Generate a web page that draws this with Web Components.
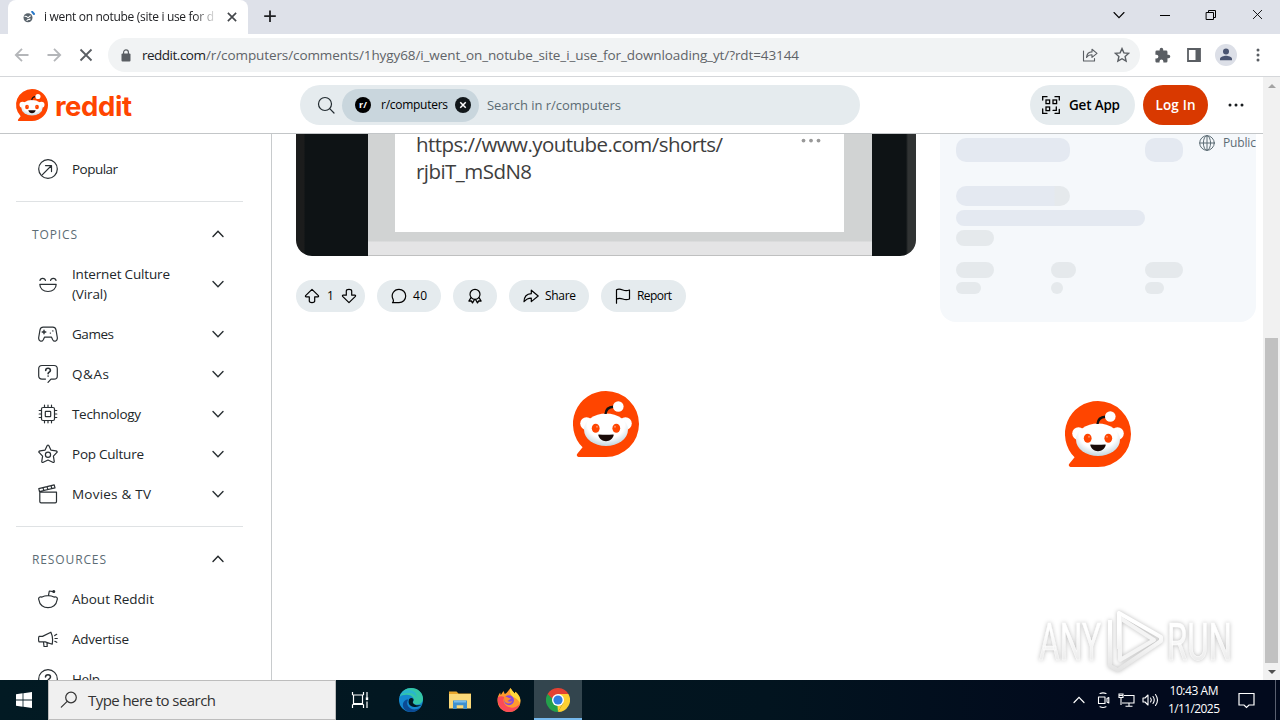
<!DOCTYPE html>
<html lang="en">
<head>
<meta charset="utf-8">
<title>reddit</title>
<style>
html,body{margin:0;width:1280px;height:720px;overflow:hidden;background:#fff}
body{font:14px/20px "Open Sans","Noto Sans",sans-serif;color:#181c1f}
</style>
</head>
<body>
<desktop-screen></desktop-screen>
<script>
const def=(name,html,setup)=>customElements.define(name,class extends HTMLElement{
  connectedCallback(){
    if(this.shadowRoot)return;
    const root=this.attachShadow({mode:'open'});
    const t=document.createElement('template');
    t.innerHTML=typeof html==='function'?html(this):html;
    root.appendChild(t.content.cloneNode(true));
    if(setup)setup(this,root);
  }
});

/* A single line of text, tracked so that it fills the width in its w attribute. */
def('fit-text',e=>`<style>:host{display:inline-block;white-space:pre;flex:none;width:${e.getAttribute('w')}px}</style><span><slot></slot></span>`,(e,root)=>{
  const s=root.querySelector('span'),n=e.textContent.length;
  const nat=s.getBoundingClientRect().width;
  if(n>1)s.style.letterSpacing=((+e.getAttribute('w')-nat)/(n-1))+'px';
});

const svg=(vb,body,extra='')=>`<svg viewBox="${vb}" fill="none" stroke="currentColor" stroke-linecap="round" stroke-linejoin="round" stroke-width="1.2" ${extra}>${body}</svg>`;
const ICONS={
  back:svg('0 0 16 16','<path d="M14.5 8H2M8 1.8 1.8 8 8 14.2" stroke-width="1.8" stroke-linecap="butt" stroke-linejoin="miter"/>'),
  fwd:svg('0 0 16 16','<path d="M1.5 8H14M8 1.8 14.2 8 8 14.2" stroke-width="1.8" stroke-linecap="butt" stroke-linejoin="miter"/>'),
  x:svg('0 0 16 16','<path d="M2.5 2.5l11 11M13.5 2.5l-11 11" stroke-width="var(--sw,1.8)" stroke-linecap="butt"/>'),
  plus:svg('0 0 16 16','<path d="M8 2.500v11.500M2.200 8.200h11.600" stroke-width="1.800" stroke-linecap="butt"/>'),
  lock:svg('0 0 10 13','<rect x=".5" y="4.6" width="9" height="8" rx="1" fill="currentColor" stroke="none"/><path d="M2.6 5V3.3a2.4 2.4 0 0 1 4.8 0V5"/>'),
  min:svg('0 0 12 12','<path d="M1 6.5h10" stroke-width="1" stroke-linecap="butt"/>'),
  restore:svg('0 0 12 12','<path d="M1.5 3.5h7v7h-7zM3.5 3.5v-2h7v7h-2" stroke-width="1" stroke-linejoin="miter"/>'),
  down:svg('0 0 12 12','<path d="M1 3.5 6 8.7l5-5.2" stroke-width="var(--sw,1.5)" stroke-linejoin="miter"/>'),
  up:svg('0 0 12 12','<path d="M1 8.5 6 3.3l5 5.2" stroke-width="var(--sw,1.5)" stroke-linejoin="miter"/>'),
  shareout:svg('0 0 16 16','<path d="M1.5 4v10h11v-2.5M4.5 10.5c.4-4 2.4-5.500 5.500-5.600V2.300L15 6.400l-5 4V7.800c-2.500 0-4 .6-5.500 2.700z" stroke-width="1.1"/>'),
  star:svg('0 0 16 16','<path d="M8 1.600 9.900 5.900l4.700.5-3.500 3.100 1 4.600L8 11.700l-4.100 2.400 1-4.600L1.400 6.400l4.700-.5z" stroke-width="1.4" stroke-linejoin="miter"/>'),
  puzzle:svg('0 0 24 24','<path fill="currentColor" stroke="none" d="M20.500 11H19V7a2 2 0 0 0-2-2h-4V3.500a2.500 2.500 0 0 0-5 0V5H4a2 2 0 0 0-2 2v3.800h1.500a2.700 2.700 0 0 1 0 5.400H2V20c0 1.100.9 2 2 2h3.800v-1.500a2.700 2.700 0 0 1 5.400 0V22H17a2 2 0 0 0 2-2v-4h1.500a2.500 2.500 0 0 0 0-5z"/>'),
  panel:svg('0 0 14 14','<path d="M1 1h12v12H1z" stroke-width="1.800" stroke-linejoin="miter"/><path d="M8.500 1H13v12H8.500z" fill="currentColor" stroke="none"/>'),
  user:svg('0 0 22 22','<circle cx="11" cy="11" r="11" fill="#dcdfe7" stroke="none"/><g fill="#4a5470" stroke="none"><circle cx="11" cy="7.600" r="3"/><path d="M5 16.300v-1.500c0-2 4-3 6-3s6 1 6 3v1.500z"/></g>'),
  vdots:svg('0 0 4 14','<g fill="currentColor" stroke="none"><circle cx="2" cy="2" r="1.500"/><circle cx="2" cy="7" r="1.500"/><circle cx="2" cy="12" r="1.500"/></g>'),
  hdots:svg('0 0 16 4','<g fill="currentColor" stroke="none"><circle cx="2" cy="2" r="1.500"/><circle cx="8" cy="2" r="1.500"/><circle cx="14" cy="2" r="1.500"/></g>'),
  search:svg('0 0 18 18','<circle cx="8" cy="8" r="6.500"/><path d="M12.700 12.700 17 17"/>'),
  winsearch:svg('0 0 18 18','<circle cx="11" cy="6.500" r="5.300"/><path d="M7.200 10.300 1.300 16.200"/>'),
  qr:svg('0 0 20 20','<g stroke-width="1.300" stroke-linejoin="miter"><path d="M1.700 5V1.700H6M14 1.700h4.300V5M1.700 14v4.300H6M18.300 14.500v3.800H14"/><rect x="5" y="5" width="3.600" height="3.600"/><rect x="12" y="5" width="3.600" height="3.600"/><rect x="5" y="12" width="3.600" height="3.600"/><path d="M12 15.300h3.300V12"/></g>'),
  popular:svg('0 0 20 20','<circle cx="10" cy="10" r="9.300"/><path d="m4.200 15.800 8.800-8.800M7.500 6.600h6v6"/>'),
  smile:svg('0 0 20 20','<path d="M1.800 10.300h16.400c0 4.500-3.600 7.200-8.200 7.200s-8.200-2.700-8.200-7.200zM2 6.500c.4-2.900 5-2.900 5.400 0M12.600 6.500c.4-2.900 5-2.900 5.400 0"/>'),
  games:svg('0 0 20 20','<path d="M5.200 3.200h9.600c1.700 0 2.800 1 3.200 2.700l1.300 7.600c.5 3.600-3 5-4.600 2.200l-1.300-2.600H6.600l-1.300 2.600C3.700 18.500.200 17.100.700 13.500L2 5.900c.4-1.700 1.500-2.700 3.200-2.700z"/><path d="M6 6.200v3.600M4.200 8h3.600M12.300 9.100h.1M14.800 6.900h.1" stroke-width="1.400"/>'),
  qa:svg('0 0 20 20','<path d="M4 1.500h12c2 0 3.300 1.300 3.300 3.200v7.200c0 2-1.300 3.200-3.300 3.200h-3l-3 3.200M7.500 15.100H4c-2 0-3.300-1.200-3.300-3.200V4.700C.7 2.800 2 1.500 4 1.500"/><path d="M7.700 6.500c0-3 4.700-2.900 4.700-.1 0 1.800-2.300 1.800-2.300 3.400M10.100 12v.1" stroke-width="1.600"/>'),
  chip:svg('0 0 20 20','<rect x="3.500" y="3.500" width="13" height="13" rx="1.500"/><rect x="7.300" y="7.300" width="5.400" height="5.400" rx=".6"/><path d="M6.500 1.200v2M10 1.200v2M13.500 1.200v2M6.500 16.800v2M10 16.800v2M13.500 16.800v2M1.200 6.500h2M1.200 10h2M1.200 13.500h2M16.800 6.500h2M16.800 10h2M16.800 13.500h2" stroke-width="1.200"/>'),
  popstar:svg('0 0 20 20','<path d="M10 1c.4 0 .6.300.8.600l2.100 4.500 5 .7c1.200.2 1.600 1.100.8 1.900l-3.300 3.500.8 4.900c.2 1.100-.5 1.700-1.500 1.200L10 16l-4.700 2.300c-1 .5-1.700-.1-1.500-1.200l.8-4.900L1.300 8.700c-.8-.8-.4-1.700.8-1.900l5-.7 2.100-4.500c.2-.3.400-.6.800-.6z"/><circle cx="10" cy="10.700" r="2.600"/>'),
  movie:svg('0 0 20 20','<path d="M1.800 8.200h16.700v9.300c0 .8-.5 1.300-1.300 1.300H3.100c-.8 0-1.300-.5-1.300-1.300zM1.500 7.500.8 4.700 16.200.9l.8 2.900zM5 3.800l.8 2.600M9 2.700l.8 2.700M13 1.700l.8 2.800"/>'),
  about:svg('0 0 20 20','<path d="M10 6.600c2.500 0 4.600.6 6 1.500 2-.9 4.200.5 3 3.100-.5 4.600-4.500 7.500-9 7.500s-8.500-2.900-9-7.500c-1.200-2.600 1-4 3-3.100 1.400-.9 3.500-1.500 6-1.500zM10.500 6.400 11.300 2l4 .6"/><circle cx="15.800" cy="2.500" r=".9" fill="currentColor"/>'),
  ad:svg('0 0 20 20','<path d="M1 7.400h3.500L12.900 3.200c1.500 3 2 8 1.300 12l-7-2.300H1c-.6-1.800-.6-3.700 0-5.500zM5.500 13l.5 4.500h3.200l-.2-3.800M16.700 6.600l2-1.300M17 9.500h2.300M16.800 12.300l2 1"/>'),
  help:svg('0 0 20 20','<circle cx="10" cy="10" r="9.300"/><path d="M7.500 8c0-3 5-3 5 0 0 1.800-2.500 1.800-2.500 3.500M10 14v.1" stroke-width="1.500"/>'),
  upvote:svg('0 0 16 16','<path d="M8 1.300 1.600 7.700c-.4.500-.1 1.100.5 1.100h3.200v4.300c0 2 5.400 2 5.400 0V8.800h3.200c.6 0 .9-.6.5-1.100z"/>'),
  downvote:svg('0 0 16 16','<path d="M8 14.700 1.600 8.300c-.4-.5-.1-1.100.5-1.100h3.200V2.900c0-2 5.400-2 5.400 0v4.300h3.200c.6 0 .9.600.5 1.100z"/>'),
  comment:svg('0 0 16 16','<path d="M1.500 14.700c1-1 1.200-2 .6-3.300C-.5 6.500 3 1.300 8 1.300c3.800 0 6.700 3 6.700 6.700S11.800 14.700 8 14.700z"/>'),
  award:svg('0 0 16 16','<circle cx="8" cy="6.300" r="5"/><path d="M4 9.700 1.900 13l2.400-.1 1.200 2L7.500 11.500M12 9.700l2.100 3.300-2.400-.1-1.200 2-2-3.400" stroke-width="1.300"/>'),
  share:svg('0 0 16 16','<path d="M1 13.700c.2-5 2.700-7.800 7.300-8V2.200L15.200 8l-6.900 5.600v-3.500C5 10 3.300 11 1 13.700z"/>'),
  flag:svg('0 0 16 16','<path d="M1.500 15.200V1.700c2.200-1 4.300-.5 6.300.3s4.300 1 6.700 0v9c-2.400 1-4.600.8-6.700 0s-4.100-1-6.300 0"/>'),
  globe:svg('0 0 16 16','<g stroke-width="1"><circle cx="8" cy="8" r="7.300"/><ellipse cx="8" cy="8" rx="3.600" ry="7.300"/><path d="M.7 8h14.600M8 .7v14.600"/></g>'),
  favicon:svg('0 0 12 12','<circle cx="5" cy="6.800" r="4.500" fill="#59636b" stroke="none"/><path d="M2 5.500c2-1 2 1 3 1.200s1-1.700 2.500-1.700M4 9.500c1-1.500 2-.5 3-1.500" stroke="#fff" stroke-width="1.100"/><path d="M9.200.8 11 3" stroke="#2878c8" stroke-width="2"/>'),
  windows:svg('0 0 16 16','<path fill="#fff" stroke="none" d="M0 2.200 6.600 1.300v6.300H0zM7.400 1.200 16 0v7.600H7.400zM0 8.400h6.600v6.300L0 13.800zM7.400 8.400H16V16l-8.600-1.200z"/>'),
  taskview:svg('0 0 18 18','<path d="M1.500 1v3M12.500 1v3M1.500 4h11M2.500 4.500v8h9v-8M1.500 13.500h11M1.500 17v-3.500M12.500 17v-3.500M16 1v5M16 10.500V17" stroke-width="1.200" stroke-linecap="butt" stroke-linejoin="miter"/><path d="M14.800 6.200h2.400v2.900h-2.400z" fill="currentColor" stroke="none"/>'),
  edge:svg('0 0 24 24','<g stroke="none"><circle cx="12" cy="12" r="12" fill="#1488d0"/><path d="M.6 9C2.500 3.200 7 0 12.200 0 19 0 24 5 24 10.500c0 4-3 6-6.500 6-2.500 0-4.300-1-3.300-2.300C16.500 10 12 6.500 7.500 6.700 4 6.800 1.800 7.500.6 9z" fill="#34c6a6"/><path d="M.6 9C2 4 6.500 1 11 2c5 1 7 4 6.500 8-.5-3-4-5-8-5C5 5 2 6.500.6 9z" fill="#25aee0" opacity=".7"/><path d="M9.300 11.500c-3.500 5 1.500 10.700 7.500 9.800 2-.3 4-1.400 5.500-2.900C20 22 16 24 12 24c-5.500 0-9-4.500-8-8.500.6-2.500 2.700-4.300 5.300-4z" fill="#0b4a94"/><path d="M10 11.500c-1.500 4 1 7.300 5.500 7.500 3 .2 5.500-1 7.500-2.500-3.500 1.500-7.500 1-9-1.500-.8-1.300.8-2 .5-3.500-.6-2-3.500-2-4.500 0z" fill="#021922"/></g>'),
  folder:svg('0 0 22 20','<g stroke="none"><path d="M0 1.500h7.500l2 2H22V18H0z" fill="#e9a72c"/><path d="M0 4h22v14.500H0z" fill="#fbd978"/><path d="M4 10.500h14V19h-3.700v-3.700H7.700V19H4z" fill="#3f91cf"/><path d="M5 10.500h12v2H5z" fill="#79bdec"/></g>'),
  firefox:svg('0 0 24 24','<g stroke="none"><path d="M12 24C5.500 24 .5 19 .5 12.500c0-3 .8-5.500 2.600-8l.7 2.600L6.500 3l1.300 3C10 5.500 11 3 13.500 0c1.500 3 3 3.500 4 5.500l1-1.700C22 7 23.500 9.500 23.500 13 23.500 19 18.500 24 12 24z" fill="#ff9a2e"/><path d="M13.500 0c1.500 3 3 3.500 4.200 5.800l.8-2C22.500 7.500 24 11 23 15c-1.500-3-4-5-7-6-2-2-4-4-2.500-9z" fill="#ffd83c"/><path d="M1 9c-1.500 8 4 15 11 15 5 0 9.500-3.500 11-8-4 4-10 5-14 1.500C6 15 6 11 7.500 9 5 8 3 8 1 9z" fill="#fb4a58"/><circle cx="12" cy="12.300" r="5" fill="#8849dc"/><path d="M7 9.500c2-1 4 0 5 .5l2 .3c-.5 1.500-2.500 1.500-3.500 2.700 1.500 1 3.500 1 5-.5-1 3.500-6.500 4-8.200.5z" fill="#ff8a30"/></g>'),
  chrome:svg('0 0 24 24','<g stroke="none"><path d="M12 12 1.600 6A12 12 0 0 1 22.400 6z" fill="#e34133"/><path d="M12 12V24A12 12 0 0 1 1.600 6z" fill="#24a04b"/><path d="M12 6h10.400A12 12 0 0 1 12 24l5.200-9z" fill="#fdd032"/><path d="M1.600 6 6.800 15 12 12V6z" fill="#24a04b"/><path d="M1.600 6h20.800H12L6.800 11z" fill="#e34133"/><path d="m17.200 15-5.200 9-.5-6z" fill="#fdd032"/><circle cx="12" cy="12" r="6" fill="#fff"/><circle cx="12" cy="12" r="4.600" fill="#2f7de1"/></g>'),
  cam:svg('0 0 16 16','<path d="M3.500 5h6.500v6.500H3.500zM12 6.500l1.800-1v5.500L12 10zM5 1.500Q8 .2 11 1.500M5 14.800q3 1.300 6 0" stroke-width="1.100"/>'),
  net:svg('0 0 17 16','<path d="M6 3.500h10v7.500H6M4 11h2M11 11v3M7.500 14.200h7M1 2h4v3.500H1zM3 5.500V13M1 3.500h4" stroke-width="1.100" stroke-linejoin="miter" stroke-linecap="butt"/>'),
  sound:svg('0 0 17 16','<path d="M1 6v4h2l3 3V3L3 6zM8.500 6q1.500 2 0 4M11 4.500q2.500 3.500 0 7M13.500 2.500q4 5.500 0 11" stroke-width="1.100"/>'),
  note:svg('0 0 17 17','<path d="M1 1.500h15v11.500h-5L8.500 15.500 6 13H1z" stroke-width="1.200" stroke-linejoin="miter"/>')
};
def('ui-icon',e=>{
  const [w,h]=e.getAttribute('size').split(' ');
  return `<style>:host{display:block;flex:none;width:${w}px;height:${h||w}px}svg{display:block;width:100%;height:100%}</style>${ICONS[e.getAttribute('name')]}`;
});

def('snoo-mark',`<style>:host{display:block}svg{display:block;width:100%;height:100%;overflow:visible}</style>
<svg viewBox="0 0 66 66"><defs><radialGradient id="h" cx=".5" cy=".35" r=".65"><stop offset=".65" stop-color="#fff"/><stop offset="1" stop-color="#c3d6df"/></radialGradient></defs>
<path fill="#ff4500" d="M33 0a33 33 0 1 1 0 66H6.500c-2.500 0-3.600-2-1.800-3.800L9.600 56.300A33 33 0 0 1 33 0z"/>
<circle cx="13.500" cy="32.500" r="6.300" fill="#fff"/><circle cx="52.500" cy="32.500" r="6.300" fill="#fff"/>
<ellipse cx="33" cy="38.700" rx="22" ry="16.200" fill="url(#h)"/>
<path d="M32.500 23c.3-4 3.200-7 8-7.300" fill="none" stroke="#111" stroke-width="2.400"/>
<circle cx="45.300" cy="15.500" r="5.300" fill="#fff"/>
<ellipse cx="22.700" cy="37.200" rx="3.900" ry="4.500" fill="#ff4500"/><ellipse cx="43.300" cy="37.200" rx="3.900" ry="4.500" fill="#ff4500"/>
<circle cx="24" cy="35.800" r="1" fill="#ff8a5c"/><circle cx="42" cy="35.800" r="1" fill="#ff8a5c"/>
<path d="M26 43.600q7 .5 14 0c.7 0 .8.500.6 1-1 3.300-3.700 5.600-7.600 5.600s-6.600-2.300-7.600-5.600c-.2-.5-.1-1 .6-1z" fill="#1a0b08"/></svg>`);

def('browser-tabs',`<style>
:host{display:flex;height:34px;background:#dee1e9;color:#202124}
.tab{width:240px;height:34px;margin-left:8px;background:#fff;border-radius:8px 8px 0 0;display:flex;align-items:center;box-sizing:border-box;padding:0 10px 0 15px}
.t{font-size:12px;margin-left:9px;width:176px;overflow:hidden;-webkit-mask:linear-gradient(90deg,#000 150px,transparent 174px);mask:linear-gradient(90deg,#000 150px,transparent 174px)}
.tab .cl{margin-left:6px;color:#44474b;--sw:2.200}
.plus{margin:8px 0 0 14px}
.ctl{margin-left:auto;display:flex;gap:34px;height:29px;align-items:center;padding-right:16px;color:#000;--sw:1.1}
</style><div class="tab"><ui-icon name="favicon" size="12"></ui-icon><div class="t"><fit-text w="170">i went on notube (site i use for d</fit-text></div><ui-icon class="cl" name="x" size="12"></ui-icon></div>
<ui-icon class="plus" name="plus" size="16"></ui-icon>
<div class="ctl"><ui-icon name="down" size="12"></ui-icon><ui-icon name="min" size="12"></ui-icon><ui-icon name="restore" size="12"></ui-icon><ui-icon name="x" size="13"></ui-icon></div>`);

def('browser-toolbar',`<style>
:host{display:flex;height:42px;align-items:center;border-bottom:1px solid #d5d7da;color:#5a5e63;background:#fff;padding-left:14px}
.nav{display:flex;gap:16px;color:#b4b6b9}
.omni{margin-left:14px;width:1032px;height:34px;border-radius:17px;background:#f1f3f4;display:flex;align-items:center;box-sizing:border-box;padding:0 10px 0 13px}
.host{color:#202124}.url{margin-left:11px;display:flex;color:#5f6368;font-size:13.500px}
.r{margin-left:auto;display:flex;gap:16px}
.ext{display:flex;align-items:center;margin-left:14px}
</style><div class="nav"><ui-icon name="back" size="16"></ui-icon><ui-icon name="fwd" size="16"></ui-icon><ui-icon name="x" size="16" style="color:#5a5e63"></ui-icon></div>
<div class="omni"><ui-icon name="lock" size="10 13"></ui-icon><div class="url"><fit-text class="host" w="64">reddit.com</fit-text><fit-text w="593">/r/computers/comments/1hygy68/i_went_on_notube_site_i_use_for_downloading_yt/?rdt=43144</fit-text></div><div class="r"><ui-icon name="shareout" size="16"></ui-icon><ui-icon name="star" size="16"></ui-icon></div></div>
<div class="ext"><ui-icon name="puzzle" size="17"></ui-icon><ui-icon name="panel" size="14" style="margin-left:16px"></ui-icon><ui-icon name="user" size="22" style="margin-left:14px"></ui-icon><ui-icon name="vdots" size="4 14" style="margin-left:19px"></ui-icon></div>`);

def('site-header',`<style>
:host{display:flex;height:56px;align-items:center;border-bottom:1px solid #c3c6c8;background:#fff;box-sizing:content-box;padding:0 19px 0 16px}
snoo-mark{width:32px;height:32px}
.word{font:700 27.500px/32px Inter,sans-serif;color:#ff4500;margin:1px 0 0 7px}
.search{margin-left:168px;width:560px;height:40px;border-radius:20px;background:#e5ebee;display:flex;align-items:center;box-sizing:border-box;padding-left:17px;color:#5c6c74;font-size:13px}
.chip{display:flex;align-items:center;height:33px;width:137px;border-radius:17px;background:#c9d6dd;margin:0 8px 0 7px;box-sizing:border-box;padding-left:13px;color:#000;font-size:12px}
.r{width:16px;height:16px;border-radius:8px;background:#000;color:#fff;font:700 9px/16px "Open Sans",sans-serif;text-align:center;margin-right:10px}
.c{width:16px;height:16px;border-radius:8px;background:#11171a;color:#fff;display:grid;place-items:center;margin-left:7px;--sw:3}
.btn{height:40px;border-radius:20px;display:flex;align-items:center;font-weight:600;font-size:13.500px;box-sizing:border-box}
.app{margin-left:170px;width:105px;background:#e5ebee;color:#000;padding-left:11px;gap:8px}
.login{margin-left:8px;width:65px;background:#d93900;color:#fff;justify-content:center}
</style><snoo-mark></snoo-mark><fit-text class="word" w="77">reddit</fit-text>
<div class="search"><ui-icon name="search" size="18" style="color:#222b30"></ui-icon><div class="chip"><span class="r">r/</span><fit-text w="67">r/computers</fit-text><span class="c"><ui-icon name="x" size="8"></ui-icon></span></div><fit-text w="134">Search in r/computers</fit-text></div>
<div class="btn app"><ui-icon name="qr" size="20"></ui-icon><fit-text w="51">Get App</fit-text></div>
<div class="btn login"><fit-text w="40">Log In</fit-text></div><ui-icon name="hdots" size="16 4" style="margin-left:20px;color:#181c1f"></ui-icon>`);

def('nav-item',e=>`<style>
:host{display:flex;align-items:center;height:40px;padding:0 19px 0 22px;font-size:13.500px;color:#22272a}
ui-icon{color:#2a3034}.l{margin-left:14px;display:flex;flex-direction:column}.a{margin-left:auto;--sw:1.4}
</style><ui-icon name="${e.getAttribute('icon')}" size="20"></ui-icon><div class="l"><slot></slot></div>${e.hasAttribute('open')?'<ui-icon class="a" name="down" size="12"></ui-icon>':''}`);
def('nav-title',`<style>:host{display:flex;align-items:center;justify-content:space-between;height:40px;padding:0 19px 0 16px;font-size:12px;color:#5c6c74}slot{display:block;padding-top:2px}ui-icon{color:#22272a;--sw:1.4}</style><slot></slot><ui-icon name="up" size="12"></ui-icon>`);

def('side-nav',`<style>
:host{display:block;overflow:hidden;box-sizing:border-box;border-right:1px solid #c8cbcd;padding:15px 28px 0 16px}
hr{margin:12px 0;border:0;height:1px;background:#dfe2e4}
.tall{height:60px}
</style>
<nav-item icon="popular"><fit-text w="46">Popular</fit-text></nav-item><hr>
<nav-title><fit-text w="45">TOPICS</fit-text></nav-title>
<nav-item class="tall" icon="smile" open><fit-text w="98">Internet Culture</fit-text><fit-text w="35">(Viral)</fit-text></nav-item>
<nav-item icon="games" open><fit-text w="42">Games</fit-text></nav-item>
<nav-item icon="qa" open><fit-text w="37">Q&amp;As</fit-text></nav-item>
<nav-item icon="chip" open><fit-text w="69">Technology</fit-text></nav-item>
<nav-item icon="popstar" open><fit-text w="72">Pop Culture</fit-text></nav-item>
<nav-item icon="movie" open><fit-text w="79">Movies &amp; TV</fit-text></nav-item><hr>
<nav-title><fit-text w="74">RESOURCES</fit-text></nav-title>
<nav-item icon="about"><fit-text w="82">About Reddit</fit-text></nav-item>
<nav-item icon="ad"><fit-text w="57">Advertise</fit-text></nav-item>
<nav-item icon="help"><fit-text w="28">Help</fit-text></nav-item>`);

def('post-media',`<style>
:host{display:block;height:122px;border-radius:0 0 16px 16px;overflow:hidden;background:linear-gradient(90deg,#1b1c1c 8px,#0e1315 9px 610px,#303333 612px);box-sizing:border-box;padding:0 44px 0 72px}
.g{height:122px;background:linear-gradient(#d1d3d3 107px,#e4e4e5 108px 121px,#bfc0c0 121px);box-sizing:border-box;padding:0 28px 0 27px}
.w{height:98px;background:#fff;box-sizing:border-box;padding:0 23px 0 21px;display:flex;justify-content:space-between}
.t{font-size:20.500px;line-height:27px;color:#3e3e3e;display:flex;flex-direction:column;margin-top:-3px}
ui-icon{margin-top:4px;color:#999}
</style><div class="g"><div class="w"><div class="t"><fit-text w="307">https://www.youtube.com/shorts/</fit-text><fit-text w="116">rjbiT_mSdN8</fit-text></div><ui-icon name="hdots" size="20 5"></ui-icon></div></div>`);

def('action-pill',e=>`<style>:host{display:flex;align-items:center;height:32px;border-radius:16px;background:#e5ebee;color:#000;font-size:12px;box-sizing:border-box;width:${e.getAttribute('width')}px;padding-left:${e.getAttribute('pad')}px;gap:${e.getAttribute('gap')||6}px}</style><slot></slot>`);

def('post-view',`<style>
:host{display:block;width:620px}.row{display:flex;gap:12px;margin-top:24px}
snoo-mark{width:66px;height:66px;margin:79px auto 0}
</style><post-media></post-media><div class="row">
<action-pill width="69" pad="8" gap="7"><ui-icon name="upvote" size="16"></ui-icon><fit-text w="7">1</fit-text><ui-icon name="downvote" size="16"></ui-icon></action-pill>
<action-pill width="64" pad="14"><ui-icon name="comment" size="16"></ui-icon><fit-text w="14">40</fit-text></action-pill>
<action-pill width="44" pad="14"><ui-icon name="award" size="16"></ui-icon></action-pill>
<action-pill width="80" pad="14"><ui-icon name="share" size="16"></ui-icon><fit-text w="31">Share</fit-text></action-pill>
<action-pill width="85" pad="14"><ui-icon name="flag" size="16"></ui-icon><fit-text w="35">Report</fit-text></action-pill></div><snoo-mark></snoo-mark>`);

def('community-card',`<style>
:host{display:block;width:316px}
.card{position:relative;height:188px;background:#f5f8fb;border-radius:0 0 16px 16px;box-sizing:border-box;padding:4px 16px 0;overflow:hidden}
.row{display:grid;grid-template-columns:95px 94px 1fr;margin-bottom:4px}
i{display:block;border-radius:10px;background:#e5e9ec}
.b{background:#e4e9f1}
.pub{position:absolute;left:259px;top:-1px;display:flex;align-items:center;gap:8px;font-size:12px;color:#5c6c74}
snoo-mark{width:66px;height:66px;margin:79px 0 0 125px}
</style><div class="card">
<div class="row" style="height:24px;margin-bottom:24px"><i class="b" style="width:114px;grid-column:1/3"></i><i class="b" style="width:38px"></i></div>
<div class="row" style="height:20px"><i style="width:114px;grid-column:1/4;background:linear-gradient(90deg,#e4e9f1 98px,#e5e9ec 99px)"></i></div>
<div class="row" style="height:16px"><i class="b" style="width:189px;grid-column:1/4"></i></div>
<div class="row" style="height:16px;margin-bottom:16px"><i style="width:38px"></i></div>
<div class="row" style="height:16px"><i style="width:38px"></i><i style="width:25px"></i><i style="width:38px"></i></div>
<div class="row" style="height:12px"><i style="width:25px"></i><i style="width:12px"></i><i style="width:19px"></i></div>
<div class="pub"><ui-icon name="globe" size="16"></ui-icon><fit-text w="33">Public</fit-text></div></div><snoo-mark></snoo-mark>`);

def('scroll-bar',`<style>
:host{display:flex;flex-direction:column;align-items:center;width:17px;background:#f1f1f1}
.a{height:17px;width:17px;display:grid;place-items:center}
.a::after{content:"";border:4px solid transparent;border-top:0;border-bottom:4px solid #a3a3a3}
.d::after{border-bottom:0;border-top:4px solid #505050}
.th{margin-top:244px;width:13px;height:325px;background:#c1c1c1}
</style><div class="a"></div><div class="th"></div><div class="a d"></div>`);

def('any-run',`<style>:host{display:block;position:absolute;left:1034px;top:604px;width:206px;height:72px}svg{display:block;overflow:visible;filter:drop-shadow(0 0 2px #bbb)}</style>
<svg width="206" height="72" viewBox="0 0 206 72"><defs><linearGradient id="f" x2="0" y2="1"><stop offset=".3" stop-color="#fff"/><stop offset="1" stop-color="#e4e4e4"/></linearGradient></defs>
<g fill="url(#f)" stroke="#fff" stroke-width=".5" font-family="Roboto,sans-serif" font-weight="400" font-size="51"><text x="5" y="56" textLength="62" lengthAdjust="spacingAndGlyphs">ANY</text><text x="133" y="56" textLength="65" lengthAdjust="spacingAndGlyphs">RUN</text></g>
<g fill="none" stroke="url(#f)" stroke-width="4" stroke-linejoin="round"><path d="M86 20v36l34-20L86 14z" stroke="#f4f4f4"/><path d="M76 16v46l8 4 43-29v-4L85 9v36"/></g></svg>`);

def('task-bar',`<style>
:host{display:flex;height:40px;background:linear-gradient(90deg,#021a23,#02141f 60%,#020a1d 85%);color:#fff}
.start{width:48px;display:grid;place-items:center}
.s{width:288px;box-sizing:border-box;border:1px solid #bdbdbd;background:#f0f0f0;color:#333;display:flex;align-items:center;padding-left:11px;font-size:15px;gap:10px}
.b{width:48px;display:grid;place-items:center;margin-left:1px;box-sizing:border-box}
.on{background:#33454e;border-bottom:2px solid #76b9ed;padding-top:2px}
.tray{margin-left:auto;display:flex;align-items:center;--sw:1.2}
.clock{font-size:12px;line-height:18px;display:flex;flex-direction:column;align-items:center;margin:0 18px 0 9px}
.end{width:4px;height:40px;border-left:1px solid #5a6070;margin-left:20px}
</style><div class="start"><ui-icon name="windows" size="16"></ui-icon></div>
<div class="s"><ui-icon name="winsearch" size="18"></ui-icon><fit-text w="128">Type here to search</fit-text></div>
<div class="b" style="margin:0 2px 0 0"><ui-icon name="taskview" size="18"></ui-icon></div>
<div class="b"><ui-icon name="edge" size="24"></ui-icon></div><div class="b"><ui-icon name="folder" size="22 20"></ui-icon></div><div class="b"><ui-icon name="firefox" size="24"></ui-icon></div><div class="b on"><ui-icon name="chrome" size="24"></ui-icon></div>
<div class="tray"><ui-icon name="up" size="12"></ui-icon><ui-icon name="cam" size="16" style="margin-left:10px"></ui-icon><ui-icon name="net" size="17 16" style="margin-left:7px"></ui-icon><ui-icon name="sound" size="17 16" style="margin-left:7px"></ui-icon>
<div class="clock"><fit-text w="49">10:43 AM</fit-text><fit-text w="52">1/11/2025</fit-text></div><ui-icon name="note" size="17"></ui-icon><div class="end"></div></div>`);

def('desktop-screen',`<style>
:host{display:flex;flex-direction:column;width:1280px;height:720px;overflow:hidden;position:relative}
.view{display:flex;height:603px}.page{width:1263px;display:flex;flex-direction:column}
.body{display:flex;flex:1;min-height:0}side-nav{width:272px}
post-view{margin-left:24px}community-card{margin-left:24px}
task-bar{flex:none}
</style><browser-tabs></browser-tabs><browser-toolbar></browser-toolbar>
<div class="view"><div class="page"><site-header></site-header><div class="body"><side-nav></side-nav><post-view></post-view><community-card></community-card></div></div><scroll-bar></scroll-bar></div>
<task-bar></task-bar><any-run></any-run>`);
</script>
</body>
</html>
